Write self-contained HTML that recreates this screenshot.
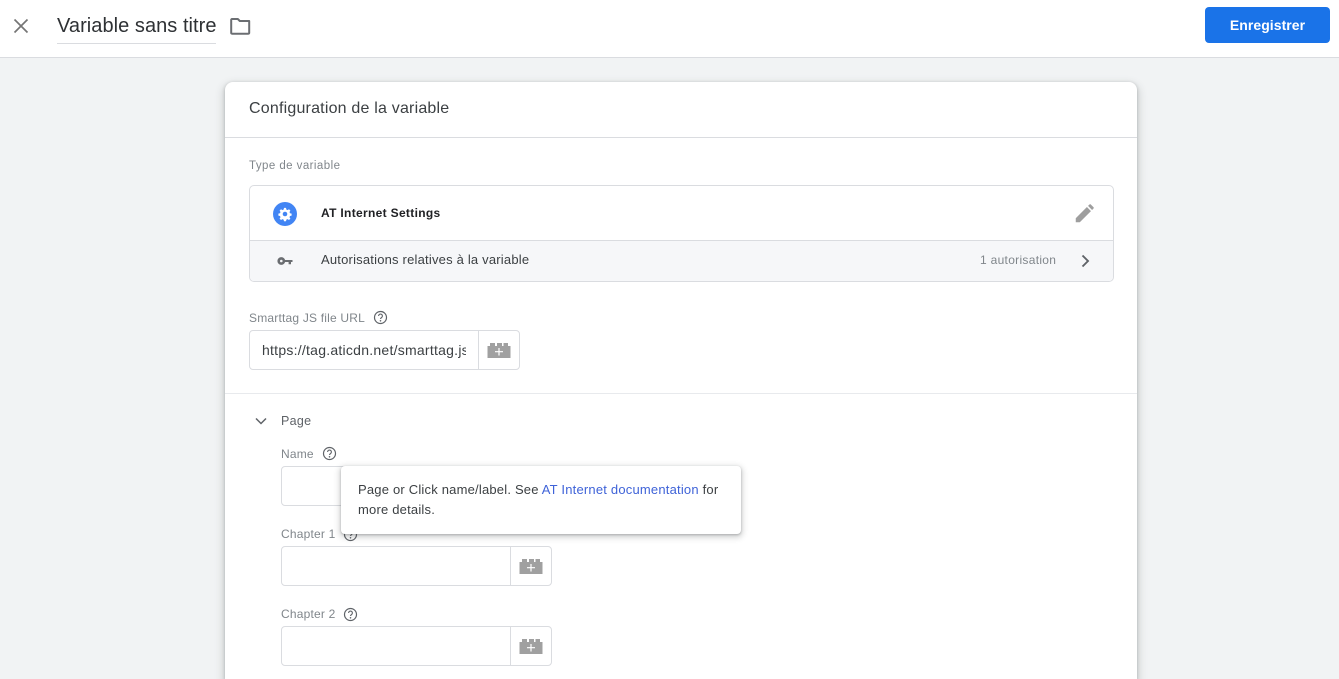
<!DOCTYPE html>
<html lang="fr">
<head>
<meta charset="utf-8">
<title>Variable sans titre</title>
<style>
html,body{margin:0;padding:0;width:1339px;height:679px;overflow:hidden;background:#f1f3f4;font-family:"Liberation Sans",sans-serif;color:#202124}
*{box-sizing:border-box}
.abs,.t{position:absolute}
.t{white-space:nowrap;line-height:16px}
#top{position:absolute;left:0;top:0;width:1339px;height:58px;background:#fff;border-bottom:1px solid #dadce0}
#btn{position:absolute;left:1205px;top:7px;width:125px;height:36px;background:#1a73e8;border-radius:4px;color:#fff;font-size:14px;font-weight:bold;line-height:36px;text-align:center;letter-spacing:.05px}
#card{position:absolute;left:225px;top:82px;width:912px;height:597px;background:#fff;border-radius:8px 8px 0 0;box-shadow:0 1px 3px rgba(60,64,67,.3),0 4px 8px 3px rgba(60,64,67,.15)}
.lab{font-size:12px;color:#80868b;letter-spacing:.2px}
.box{position:absolute;background:#fff;border:1px solid #dadce0;border-radius:4px}
.sep{position:absolute;top:0;bottom:0;width:1px;background:#dadce0}
#tip{position:absolute;left:341px;top:466px;width:400px;height:68px;background:#fff;border-radius:4px;box-shadow:0 1px 2px rgba(60,64,67,.3),0 2px 6px 2px rgba(60,64,67,.2);font-size:13px;line-height:20px;padding:14px 17px;color:#3c4043;letter-spacing:.2px;white-space:nowrap}
#tip span{color:#3f63d8}
svg{position:absolute;display:block}
</style>
</head>
<body>
<div id="top">
  <svg style="left:9px;top:14px" width="24" height="24" viewBox="0 0 24 24"><path d="M5.500 5.500l13 13M18.500 5.500l-13 13" stroke="#757575" stroke-width="1.700" fill="none"/></svg>
  <div class="t" style="left:57px;top:14px;font-size:20px;line-height:24px;color:#2e3134;letter-spacing:.05px">Variable sans titre</div>
  <div class="abs" style="left:57px;top:43px;width:159px;height:1px;background:#dadce0"></div>
  <svg style="left:228px;top:14px" width="24" height="24" viewBox="0 0 24 24"><path d="M3.800 5h6l2 2h9.400v11.800a.9.900 0 0 1-.9.900H4.100a.9.900 0 0 1-.9-.9V5.600z" fill="none" stroke="#6b6e72" stroke-width="2" stroke-linejoin="round"/></svg>
  <div id="btn">Enregistrer</div>
</div>

<div id="card">
  <div class="t" style="left:24px;top:17px;font-size:16px;line-height:20px;color:#3c4043;letter-spacing:.2px">Configuration de la variable</div>
  <div class="abs" style="left:0;top:55px;width:912px;height:1px;background:#dadce0"></div>
  <div class="t lab" style="left:24px;top:76px;font-size:11.500px;letter-spacing:.44px">Type de variable</div>

  <div class="box" style="left:24px;top:103px;width:865px;height:97px;overflow:hidden;border-radius:5px">
    <div class="abs" style="left:0;top:54px;width:865px;height:1px;background:#dadce0"></div>
    <div class="abs" style="left:0;top:55px;width:865px;height:42px;background:#f6f7f9"></div>
    <svg style="left:22px;top:15px" width="26" height="26" viewBox="0 0 26 26">
      <circle cx="13" cy="13" r="12" fill="#4285f4"/>
      <path d="M13 7.200l1 .2.400 1.600 1.200.5 1.400-.9 1.400 1.400-.9 1.400.5 1.200 1.600.4v2l-1.600.4-.5 1.200.9 1.400-1.400 1.400-1.400-.9-1.200.5-.4 1.600h-2l-.4-1.600-1.200-.5-1.400.9-1.400-1.400.9-1.400-.5-1.200-1.600-.4v-2l1.600-.4.5-1.200-.9-1.400 1.400-1.400 1.400.9 1.200-.5.400-1.600z" fill="#fff" transform="translate(0 -.4)"/>
      <circle cx="13" cy="13" r="2.300" fill="#4285f4"/>
    </svg>
    <div class="t" style="left:71px;top:19px;font-size:12px;font-weight:bold;color:#202124;letter-spacing:.32px">AT Internet Settings</div>
    <svg style="left:823px;top:17px" width="22" height="22" viewBox="0 0 24 24"><path d="M3 21v-4.400L15.200 4.400l4.400 4.400L7.400 21zM16.400 3.200l1.600-1.600a1 1 0 0 1 1.400 0l3 3a1 1 0 0 1 0 1.400l-1.600 1.600z" fill="#9e9e9e"/></svg>
    <svg style="left:27px;top:66px" width="18" height="18" viewBox="0 0 18 18"><circle cx="4.300" cy="9" r="2.600" fill="none" stroke="#6a6d71" stroke-width="2.600"/><path d="M6.500 8h9v2h-1.500v2.200h-2.400V10H6.500z" fill="#6a6d71"/></svg>
    <div class="t" style="left:71px;top:66px;font-size:13px;color:#3c4043;letter-spacing:.2px">Autorisations relatives à la variable</div>
    <div class="t" style="left:730px;top:66px;font-size:12px;color:#80868b;letter-spacing:.3px">1 autorisation</div>
    <svg style="left:826px;top:66px" width="18" height="18" viewBox="0 0 18 18"><path d="M6.500 3.500L12 9l-5.500 5.500" fill="none" stroke="#5f6368" stroke-width="1.900"/></svg>
  </div>

  <div class="t lab" style="left:24px;top:228px">Smarttag JS file URL</div>
  <svg style="left:148px;top:228px" width="15" height="15" viewBox="0 0 15 15"><circle cx="7.500" cy="7.500" r="6" fill="none" stroke="#5f6368" stroke-width="1.200"/><path d="M5.600 6a1.900 1.900 0 1 1 3 1.500c-.7.500-1.100.8-1.100 1.500" fill="none" stroke="#5f6368" stroke-width="1.100"/><circle cx="7.500" cy="10.800" r=".8" fill="#5f6368"/></svg>
  <div class="box" style="left:24px;top:248px;width:271px;height:40px">
    <div class="abs" style="left:12px;top:0;width:204px;height:38px;overflow:hidden;white-space:nowrap;font-size:14px;line-height:38px;color:#3c4043;letter-spacing:.25px">https://tag.aticdn.net/smarttag.js</div>
    <div class="sep" style="left:228px"></div>
    <svg style="left:237px;top:11px" width="24" height="16" viewBox="0 0 24 16"><path d="M.5 4H3V1h5v3h2V1h5v3h1.500V1H21v3h2.500v12H.5z" fill="#a0a0a0"/><path d="M12 6v7.500M8 9.700h8" stroke="#fff" stroke-width="1.200"/></svg>
  </div>

  <div class="abs" style="left:0;top:311px;width:912px;height:1px;background:#e8eaed"></div>

  <svg style="left:28px;top:332px" width="16" height="14" viewBox="0 0 16 14"><path d="M3 4.500l5 5 5-5" fill="none" stroke="#5f6368" stroke-width="1.500"/></svg>
  <div class="t" style="left:56px;top:331px;font-size:12.500px;color:#5f6368;letter-spacing:.3px">Page</div>

  <div class="t lab" style="left:56px;top:364px">Name</div>
  <svg style="left:97px;top:364px" width="15" height="15" viewBox="0 0 15 15"><circle cx="7.500" cy="7.500" r="6" fill="none" stroke="#5f6368" stroke-width="1.200"/><path d="M5.600 6a1.900 1.900 0 1 1 3 1.500c-.7.500-1.100.8-1.100 1.500" fill="none" stroke="#5f6368" stroke-width="1.100"/><circle cx="7.500" cy="10.800" r=".8" fill="#5f6368"/></svg>
  <div class="box" style="left:56px;top:384px;width:271px;height:40px"></div>

  <div class="t lab" style="left:56px;top:444px">Chapter 1</div>
  <svg style="left:118px;top:445px" width="15" height="15" viewBox="0 0 15 15"><circle cx="7.500" cy="7.500" r="6" fill="none" stroke="#5f6368" stroke-width="1.200"/><path d="M5.600 6a1.900 1.900 0 1 1 3 1.500c-.7.500-1.100.8-1.100 1.500" fill="none" stroke="#5f6368" stroke-width="1.100"/><circle cx="7.500" cy="10.800" r=".8" fill="#5f6368"/></svg>
  <div class="box" style="left:56px;top:464px;width:271px;height:40px">
    <div class="sep" style="left:228px"></div>
    <svg style="left:237px;top:11px" width="24" height="16" viewBox="0 0 24 16"><path d="M.5 4H3V1h5v3h2V1h5v3h1.500V1H21v3h2.500v12H.5z" fill="#a0a0a0"/><path d="M12 6v7.500M8 9.700h8" stroke="#fff" stroke-width="1.200"/></svg>
  </div>

  <div class="t lab" style="left:56px;top:524px">Chapter 2</div>
  <svg style="left:118px;top:525px" width="15" height="15" viewBox="0 0 15 15"><circle cx="7.500" cy="7.500" r="6" fill="none" stroke="#5f6368" stroke-width="1.200"/><path d="M5.600 6a1.900 1.900 0 1 1 3 1.500c-.7.500-1.100.8-1.100 1.500" fill="none" stroke="#5f6368" stroke-width="1.100"/><circle cx="7.500" cy="10.800" r=".8" fill="#5f6368"/></svg>
  <div class="box" style="left:56px;top:544px;width:271px;height:40px">
    <div class="sep" style="left:228px"></div>
    <svg style="left:237px;top:11px" width="24" height="16" viewBox="0 0 24 16"><path d="M.5 4H3V1h5v3h2V1h5v3h1.500V1H21v3h2.500v12H.5z" fill="#a0a0a0"/><path d="M12 6v7.500M8 9.700h8" stroke="#fff" stroke-width="1.200"/></svg>
  </div>
</div>

<div id="tip">Page or Click name/label. See <span>AT Internet documentation</span> for<br>more details.</div>
</body>
</html>
